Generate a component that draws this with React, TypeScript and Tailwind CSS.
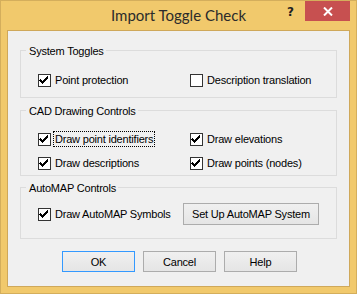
import type { ReactNode } from "react";

function CheckBox({ checked }: { checked: boolean }) {
  return (
    <span className="flex h-[13px] w-[13px] shrink-0 items-center justify-center border border-[#333333] bg-white">
      {checked && (
        <svg width="11" height="11" viewBox="0 0 11 11" shapeRendering="crispEdges">
          <path d="M1 4h1v1h1v1h1v-1h1v-1h1v-1h1v-1h1v-1h1v3h-1v1h-1v1h-1v1h-1v1h-1v1h-1v-1h-1v-1h-1v-1h-1z" fill="#000" />
        </svg>
      )}
    </span>
  );
}

function Check({
  label,
  checked,
  focused = false,
}: {
  label: string;
  checked: boolean;
  focused?: boolean;
}) {
  return (
    <label className="flex items-center">
      <CheckBox checked={checked} />
      <span
        className={`ml-[2px] whitespace-nowrap border px-[1px] leading-[14px] ${
          focused ? "border-dotted border-black" : "border-transparent"
        }`}
      >
        {label}
      </span>
    </label>
  );
}

function GroupBox({
  title,
  className,
  children,
}: {
  title: string;
  className: string;
  children: ReactNode;
}) {
  return (
    <div className={`relative mx-[12px] border border-[#dcdcdc] ${className}`}>
      <span className="absolute left-[5px] top-[-7px] bg-[#f0f0f0] pl-[3px] pr-[2px] leading-[14px]">
        {title}
      </span>
      {children}
    </div>
  );
}

function Button({
  children,
  width,
  primary = false,
}: {
  children: ReactNode;
  width: string;
  primary?: boolean;
}) {
  return (
    <button
      className={`flex items-center justify-center border bg-gradient-to-b from-[#f0f0f0] to-[#e5e5e5] leading-[14px] text-black ${width} ${
        primary ? "border-[#3399ff]" : "border-[#acacac]"
      }`}
    >
      {children}
    </button>
  );
}

export default function App() {
  return (
    <div className="flex h-[294px] w-[357px] flex-col border border-[#d4ae5c] bg-[#f1c96c] font-['Liberation_Sans',Arial,sans-serif] text-[11px] tracking-[-0.2px] text-black">
      <div className="relative flex h-[29px] shrink-0 items-start justify-center tracking-normal">
        <span className="mt-[5px] font-['Lato','Noto_Sans',sans-serif] text-[15px] leading-[18px] text-[#2b2b2b]">
          Import Toggle Check
        </span>
        <span className="absolute left-[286px] top-[4px] font-['DejaVu_Sans',sans-serif] text-[12px] font-bold leading-[14px] text-[#222]">
          ?
        </span>
        <div className="absolute right-[6px] top-0 flex h-[20px] w-[45px] items-center justify-center bg-[#c75050]">
          <svg width="10" height="9" viewBox="0 0 10 9">
            <path d="M1 0.5 L9 8.5 M9 0.5 L1 8.5" stroke="#fff" strokeWidth="2" />
          </svg>
        </div>
      </div>

      <div className="mx-[6px] flex h-[257px] shrink-0 flex-col border border-[#cfa85a] bg-[#f0f0f0]">
        <GroupBox title="System Toggles" className="mt-[19px] h-[48px] pl-[17px] pt-[21px]">
          <div className="grid grid-cols-[152px_1fr]">
            <Check label="Point protection" checked />
            <Check label="Description translation" checked={false} />
          </div>
        </GroupBox>

        <GroupBox title="CAD Drawing Controls" className="mt-[12px] h-[66px] pl-[17px] pt-[20px]">
          <div className="grid grid-cols-[152px_1fr] gap-y-[8px]">
            <Check label="Draw point identifiers" checked focused />
            <Check label="Draw elevations" checked />
            <Check label="Draw descriptions" checked />
            <Check label="Draw points (nodes)" checked />
          </div>
        </GroupBox>

        <GroupBox title="AutoMAP Controls" className="mt-[11px] h-[52px] pl-[17px] pt-[15px]">
          <div className="flex h-[22px] items-center">
            <div className="w-[145px]">
              <Check label="Draw AutoMAP Symbols" checked />
            </div>
            <Button width="h-[22px] w-[136px]">Set Up AutoMAP System</Button>
          </div>
        </GroupBox>

        <div className="ml-[54px] mt-[12px] flex gap-[8px]">
          <Button width="h-[21px] w-[73px]" primary>
            OK
          </Button>
          <Button width="h-[21px] w-[73px]">Cancel</Button>
          <Button width="h-[21px] w-[73px]">Help</Button>
        </div>
      </div>
    </div>
  );
}
